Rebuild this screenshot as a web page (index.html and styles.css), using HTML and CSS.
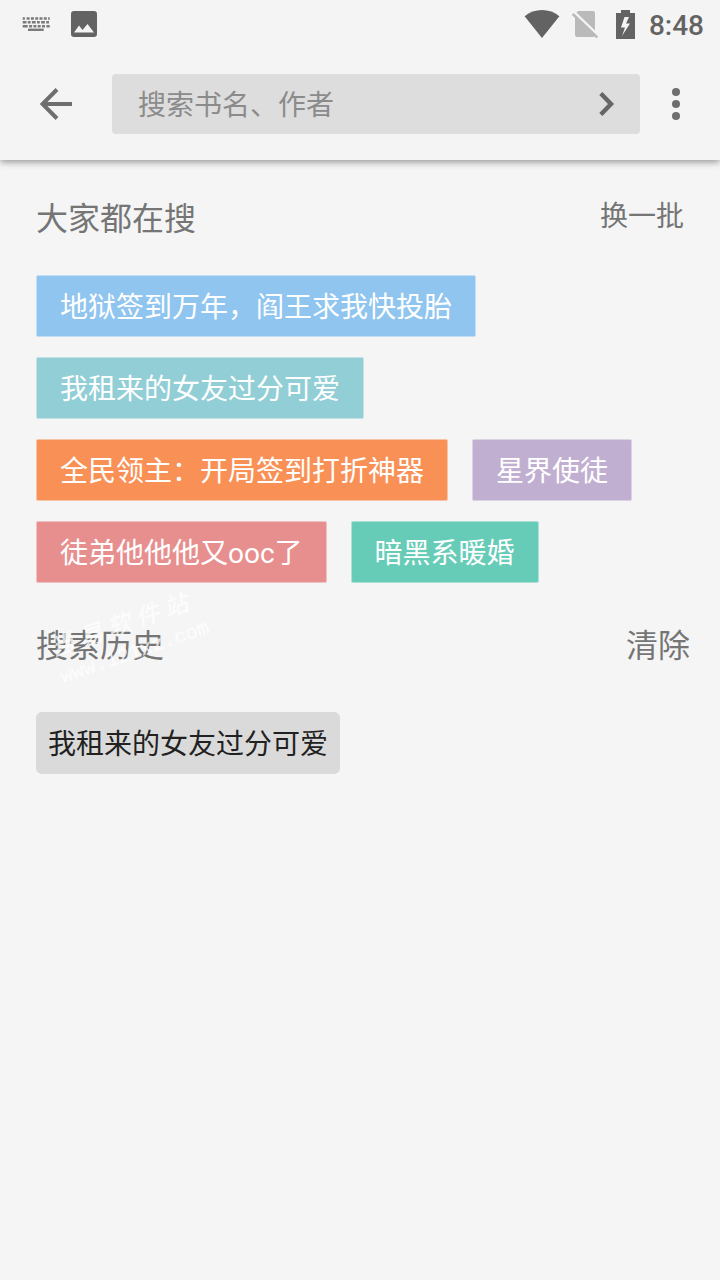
FILE: index.html
```html
<!DOCTYPE html>
<html lang="zh-CN">

<head>
  <meta charset="UTF-8">
  <meta name="viewport" content="width=device-width, initial-scale=1">
  <title>搜索</title>
  <link rel="stylesheet" href="styles.css">
</head>

<body>

  <header class="header">
    <div class="status">
      <svg class="icon-keyboard" width="28" height="16" viewBox="0 0 28 16">
        <path d="M.7 2.500h27" stroke-dasharray="2.200 1.700 3 1.300 3 1.300 3 1.300 3 1.300 3 1.300" />
        <path d="M.7 6.200h27" stroke-dasharray="3.800 1.300 2.800 1.300" />
        <path d="M.7 10.200h27" stroke-dasharray="5 1.400 3 1.300 3 1.300 3 1.300 3 1.400" />
        <path d="M6 13.800h15.700" />
      </svg>
      <svg class="icon-image" width="26" height="26" viewBox="0 0 26 26">
        <path fill-rule="evenodd" d="M3 0h20a3 3 0 0 1 3 3v20a3 3 0 0 1-3 3H3a3 3 0 0 1-3-3V3a3 3 0 0 1 3-3zM3 21.500h20L16.500 13l-5 6-3.500-4.500z" />
      </svg>
      <div class="status-right">
        <svg width="36" height="28" viewBox="0 0 36 28">
          <path d="M18 28L.6 6.200C5.500 2.200 11.500 0 18 0s12.500 2.200 17.400 6.200z" />
        </svg>
        <svg class="icon-sim" width="28" height="28" viewBox="0 0 28 28">
          <path class="pale" d="M7 1h15a2 2 0 0 1 2 2v22a2 2 0 0 1-2 2H6a2 2 0 0 1-2-2V4z" />
          <path class="slash-gap" d="M3 2l25 24" />
          <path class="slash" d="M1.700 4l24.600 23.500" />
        </svg>
        <svg class="icon-battery" width="19" height="29" viewBox="0 0 19 29">
          <path fill-rule="evenodd" d="M5 0h9v3h5v26H0V3h5zM8.500 7L5 17.500h4L6 26 14 13.500h-4L13 7z" />
        </svg>
        <span class="clock">8:48</span>
      </div>
    </div>

    <div class="toolbar">
      <svg width="32" height="32" viewBox="0 0 32 32">
        <path class="line" d="M32 16H3M17 1.500L2.500 16 17 30.500" />
      </svg>
      <div class="search">
        <span class="placeholder">搜索书名、作者</span>
        <svg width="16" height="24" viewBox="0 0 16 24">
          <path class="line chevron" d="M1.800 1.500L12 12 1.800 22.500" />
        </svg>
      </div>
      <svg width="8" height="32" viewBox="0 0 8 32">
        <circle cx="4" cy="4" r="4" />
        <circle cx="4" cy="16" r="4" />
        <circle cx="4" cy="28" r="4" />
      </svg>
    </div>
  </header>

  <main class="main">
    <div class="heading">
      <h2>大家都在搜</h2>
      <a class="refresh">换一批</a>
    </div>

    <div class="tags">
      <span class="tag blue">地狱签到万年，阎王求我快投胎</span>
      <span class="tag teal">我租来的女友过分可爱</span>
      <span class="tag orange">全民领主：开局签到打折神器</span>
      <span class="tag purple">星界使徒</span>
      <span class="tag red">徒弟他他他又ooc了</span>
      <span class="tag green">暗黑系暖婚</span>
    </div>

    <div class="heading history">
      <h2>搜索历史</h2>
      <a class="clear">清除</a>
      <div class="watermark">
        <div class="mark-name">当易软件站</div>
        <div class="mark-url">www.121xz.com</div>
      </div>
    </div>

    <span class="history-item">我租来的女友过分可爱</span>
  </main>

</body>

</html>
```
FILE: styles.css
```css
body {
  margin: 0;
  background: #f5f5f5;
  color: #757575;
  font-family: Roboto, "Noto Sans CJK SC", sans-serif;
  font-size: 28px;
}

svg {
  display: block;
  flex: none;
  fill: #6e6e6e;
}

.line {
  fill: none;
  stroke: #6e6e6e;
  stroke-width: 4;
}

.chevron {
  stroke: #666;
  stroke-width: 4.4;
}

/* status bar + search bar */
.header {
  height: 160px;
  background: #f4f4f4;
  box-shadow: 0 2px 7px rgba(0, 0, 0, .4);
}

.status {
  display: flex;
  align-items: center;
  height: 48px;
  padding: 0 16px 0 22px;
}

.status svg {
  fill: #636363;
}

.icon-keyboard {
  stroke: #7b7b7b;
  stroke-width: 2.4;
}

.icon-image {
  margin-left: 21px;
}

.status-right {
  display: flex;
  align-items: center;
  margin-left: auto;
}

.icon-sim {
  margin-left: 11px;
}

.status .pale {
  fill: #bababa;
}

.slash {
  stroke: #bababa;
  stroke-width: 2.5;
}

.slash-gap {
  stroke: #f4f4f4;
  stroke-width: 2.5;
}

.icon-battery {
  margin-left: 17px;
}

.clock {
  margin-left: 14px;
  padding-top: 4px;
  color: #636363;
  font-size: 28px;
  font-weight: 500;
  line-height: 44px;
}

.toolbar {
  display: flex;
  align-items: center;
  height: 112px;
  padding: 0 40px;
}

.search {
  display: flex;
  align-items: center;
  justify-content: space-between;
  box-sizing: border-box;
  width: 528px;
  height: 60px;
  margin: 0 32px 0 40px;
  padding: 0 25px 0 26px;
  border-radius: 4px;
  background: #ddd;
  color: #8b8b8b;
}

.placeholder {
  padding-bottom: 2px;
}

/* content */
.main {
  padding: 35px 36px 0;
}

.heading {
  display: flex;
  justify-content: space-between;
  height: 80px;
}

.heading h2 {
  margin: 0;
  font-size: 32px;
  font-weight: 400;
  line-height: 48px;
}

.refresh {
  line-height: 44px;
}

.tags {
  display: flex;
  flex-wrap: wrap;
  gap: 20px 24px;
}

.tag {
  box-sizing: border-box;
  height: 62px;
  padding: 2px 23px 0;
  border: 1px solid rgba(245, 245, 245, .5);
  border-radius: 2px;
  color: #fff;
  line-height: 60px;
}

.blue { background: #90c5f0; }
.teal { background: #92ced6; }
.orange { background: #f99157; }
.purple { background: #c1afd1; }
.red { background: #e78f8e; }
.green { background: #67ccb7; }

.history {
  position: relative;
  height: 90px;
  margin-top: 39px;
}

.clear {
  margin-right: -6px;
  font-size: 32px;
  line-height: 48px;
}

.history-item {
  display: inline-block;
  box-sizing: border-box;
  height: 62px;
  padding: 2px 12px 0;
  border-radius: 6px;
  background: #dadada;
  color: #212121;
  line-height: 60px;
  padding-top: 3px;
}

/* faint site mark over the history heading */
.watermark {
  position: absolute;
  left: 15px;
  top: -17px;
  color: rgba(255, 255, 255, .75);
  transform: rotate(-19deg);
  white-space: nowrap;
}

.mark-name {
  margin-bottom: 5px;
  font-family: "Noto Sans CJK SC", sans-serif;
  font-size: 24px;
  font-style: italic;
  font-weight: 500;
  line-height: 32px;
  letter-spacing: 6px;
}

.mark-url {
  font-family: "Liberation Mono", monospace;
  font-size: 20px;
  line-height: 24px;
  -webkit-text-stroke: .4px rgba(255, 255, 255, .6);
}
```
